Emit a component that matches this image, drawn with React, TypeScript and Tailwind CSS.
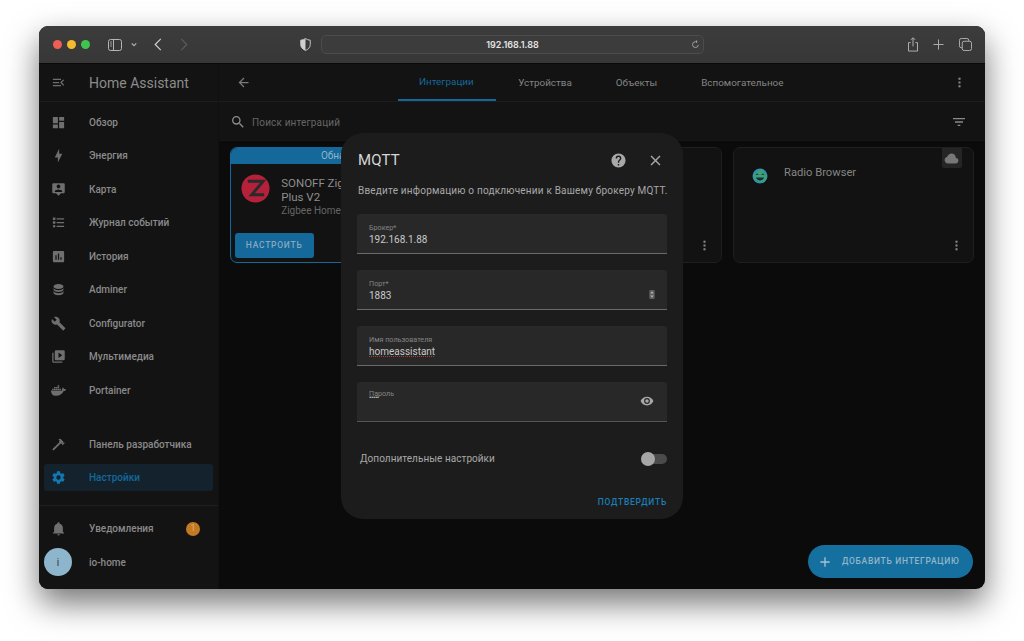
import React from 'react';
import { FaDocker } from 'react-icons/fa';

const mdi = {
  dashboard: 'M13,3V9H21V3M13,21H21V11H13M3,21H11V15H3M3,13H11V3H3V13Z',
  bolt: 'M11 15H6L13 1V9H18L11 23V15Z',
  map: 'M20 2H4C2.9 2 2 2.9 2 4V16C2 17.1 2.9 18 4 18H8L12 22L16 18H20C21.1 18 22 17.1 22 16V4C22 2.9 21.1 2 20 2M12 4C13.66 4 15 5.34 15 7S13.66 10 12 10 9 8.66 9 7 10.34 4 12 4M18 16H6V15C6 13 10 11.9 12 11.9S18 13 18 15V16Z',
  list: 'M3,4H7V8H3V4M3,10H7V14H3V10M5,20A2,2 0 0,0 7,18A2,2 0 0,0 5,16A2,2 0 0,0 3,18A2,2 0 0,0 5,20M9,5V7H21V5H9M9,19H21V17H9V19M9,13H21V11H9V13Z',
  chart: 'M19,3H5C3.9,3 3,3.9 3,5V19C3,20.1 3.9,21 5,21H19C20.1,21 21,20.1 21,19V5C21,3.9 20.1,3 19,3M9,17H7V10H9V17M13,17H11V7H13V17M17,17H15V13H17V17Z',
  database: 'M12,3C7.58,3 4,4.79 4,7C4,9.21 7.58,11 12,11C16.42,11 20,9.21 20,7C20,4.79 16.42,3 12,3M4,9V12C4,14.21 7.58,16 12,16C16.42,16 20,14.21 20,12V9C20,11.21 16.42,13 12,13C7.58,13 4,11.21 4,9M4,14V17C4,19.21 7.58,21 12,21C16.42,21 20,19.21 20,17V14C20,16.21 16.42,18 12,18C7.58,18 4,16.21 4,14Z',
  wrench: 'M22.7,19L13.6,9.9C14.5,7.6 14,4.9 12.1,3C10.1,1 7.1,0.6 4.7,1.7L9,6L6,9L1.6,4.7C0.4,7.1 0.9,10.1 2.9,12.1C4.8,14 7.5,14.5 9.8,13.6L18.9,22.7C19.3,23.1 19.9,23.1 20.3,22.7L22.6,20.4C23.1,20 23.1,19.3 22.7,19Z',
  media: 'M4,6H2V20A2,2 0 0,0 4,22H18V20H4V6M20,2H8A2,2 0 0,0 6,4V16A2,2 0 0,0 8,18H20A2,2 0 0,0 22,16V4A2,2 0 0,0 20,2M12,14.5V5.5L18,10L12,14.5Z',
  hammer: 'M2 19.63L13.43 8.2L12.72 7.5L14.14 6.07L12 3.89C13.2 2.7 15.09 2.7 16.27 3.89L19.87 7.5L18.45 8.91H21.29L22 9.62L18.45 13.21L17.74 12.5V9.62L16.27 11.04L15.56 10.33L4.13 21.76L2 19.63Z',
  cog: 'M12,15.5A3.5,3.5 0 0,1 8.5,12A3.5,3.5 0 0,1 12,8.5A3.5,3.5 0 0,1 15.5,12A3.5,3.5 0 0,1 12,15.5M19.43,12.97C19.47,12.65 19.5,12.33 19.5,12C19.5,11.67 19.47,11.34 19.43,11L21.54,9.37C21.73,9.22 21.78,8.95 21.66,8.73L19.66,5.27C19.54,5.05 19.27,4.96 19.05,5.05L16.56,6.05C16.04,5.66 15.5,5.32 14.87,5.07L14.5,2.42C14.46,2.18 14.25,2 14,2H10C9.75,2 9.54,2.18 9.5,2.42L9.13,5.07C8.5,5.32 7.96,5.66 7.44,6.05L4.95,5.05C4.73,4.96 4.46,5.05 4.34,5.27L2.34,8.73C2.21,8.95 2.27,9.22 2.46,9.37L4.57,11C4.53,11.34 4.5,11.67 4.5,12C4.5,12.33 4.53,12.65 4.57,12.97L2.46,14.63C2.27,14.78 2.21,15.05 2.34,15.27L4.34,18.73C4.46,18.95 4.73,19.03 4.95,18.95L7.44,17.94C7.96,18.34 8.5,18.68 9.13,18.93L9.5,21.58C9.54,21.82 9.75,22 10,22H14C14.25,22 14.46,21.82 14.5,21.58L14.87,18.93C15.5,18.67 16.04,18.34 16.56,17.94L19.05,18.95C19.27,19.03 19.54,18.95 19.66,18.73L21.66,15.27C21.78,15.05 21.73,14.78 21.54,14.63L19.43,12.97Z',
  bell: 'M21,19V20H3V19L5,17V11C5,7.9 7.03,5.17 10,4.29C10,4.19 10,4.1 10,4A2,2 0 0,1 12,2A2,2 0 0,1 14,4C14,4.1 14,4.19 14,4.29C16.97,5.17 19,7.9 19,11V17L21,19M14,21A2,2 0 0,1 12,23A2,2 0 0,1 10,21',
  menuOpen: 'M21,15.61L19.59,17L14.58,12L19.59,7L21,8.39L17.44,12L21,15.61M3,6H16V8H3V6M3,13V11H13V13H3M3,18V16H16V18H3Z',
  back: 'M20,11V13H8L13.5,18.5L12.08,19.92L4.16,12L12.08,4.08L13.5,5.5L8,11H20Z',
  dots: 'M12,16A2,2 0 0,1 14,18A2,2 0 0,1 12,20A2,2 0 0,1 10,18A2,2 0 0,1 12,16M12,10A2,2 0 0,1 14,12A2,2 0 0,1 12,14A2,2 0 0,1 10,12A2,2 0 0,1 12,10M12,4A2,2 0 0,1 14,6A2,2 0 0,1 12,8A2,2 0 0,1 10,6A2,2 0 0,1 12,4Z',
  search: 'M9.5,3A6.5,6.5 0 0,1 16,9.5C16,11.11 15.41,12.59 14.44,13.73L14.71,14H15.5L20.5,19L19,20.5L14,15.5V14.71L13.73,14.44C12.59,15.41 11.11,16 9.5,16A6.5,6.5 0 0,1 3,9.5A6.5,6.5 0 0,1 9.5,3M9.5,5C7,5 5,7 5,9.5C5,12 7,14 9.5,14C12,14 14,12 14,9.5C14,7 12,5 9.5,5Z',
  filter: 'M6,13H18V11H6M3,6V8H21V6M10,18H14V16H10V18Z',
  help: 'M15.07,11.25L14.17,12.17C13.45,12.89 13,13.5 13,15H11V14.5C11,13.39 11.45,12.39 12.17,11.67L13.41,10.41C13.78,10.05 14,9.55 14,9C14,7.89 13.1,7 12,7A2,2 0 0,0 10,9H8A4,4 0 0,1 12,5A4,4 0 0,1 16,9C16,9.88 15.64,10.67 15.07,11.25M13,19H11V17H13M12,2A10,10 0 0,0 2,12A10,10 0 0,0 12,22A10,10 0 0,0 22,12C22,6.47 17.5,2 12,2Z',
  close: 'M19,6.41L17.59,5L12,10.59L6.41,5L5,6.41L10.59,12L5,17.59L6.41,19L12,13.41L17.59,19L19,17.59L13.41,12L19,6.41Z',
  eye: 'M12,9A3,3 0 0,0 9,12A3,3 0 0,0 12,15A3,3 0 0,0 15,12A3,3 0 0,0 12,9M12,17A5,5 0 0,1 7,12A5,5 0 0,1 12,7A5,5 0 0,1 17,12A5,5 0 0,1 12,17M12,4.5C7,4.5 2.73,7.61 1,12C2.73,16.39 7,19.5 12,19.5C17,19.5 21.27,16.39 23,12C21.27,7.61 17,4.5 12,4.5Z',
  cloud: 'M6.5 20Q4.22 20 2.61 18.43 1 16.85 1 14.58 1 12.63 2.17 11.1 3.35 9.57 5.25 9.15 5.88 6.85 7.75 5.43 9.63 4 12 4 14.93 4 16.96 6.04 19 8.07 19 11 20.73 11.2 21.86 12.5 23 13.78 23 15.5 23 17.38 21.69 18.69 20.38 20 18.5 20Z',
  plus: 'M19,13H13V19H11V13H5V11H11V5H13V11H19V13Z',
};

const Icon = ({ d, className }: { d: string; className: string }) => (
  <svg viewBox="0 0 24 24" fill="currentColor" className={className}>
    <path d={d} />
  </svg>
);

const SideItem = ({ icon, label, docker, active, badge }: { icon?: string; label: string; docker?: boolean; active?: boolean; badge?: boolean }) => (
  <div className="h-[33.5px] px-[5px] flex items-center">
    <div className={`h-[27px] w-full rounded-[3px] flex items-center ${active ? 'bg-[#13222d]' : ''}`}>
      <div className="w-[45px] pl-[7px] shrink-0">
        {docker ? (
          <FaDocker className="w-[15px] h-[15px] text-[#6f6f6f]" />
        ) : (
          <Icon d={icon as string} className={`w-[15px] h-[15px] ${active ? 'text-[#1478b0]' : 'text-[#6f6f6f]'}`} />
        )}
      </div>
      <span className={`text-[10px] font-medium ${active ? 'text-[#14689a]' : 'text-[#8a8a8a]'}`}>{label}</span>
      {badge && (
        <span className="ml-auto mr-[13px] w-[14px] h-[14px] rounded-full bg-[#c17a22] text-[#e0b070] text-[9px] flex items-center justify-center">1</span>
      )}
    </div>
  </div>
);

const Field = ({ label, value, children }: { label: string; value?: React.ReactNode; children?: React.ReactNode }) => (
  <div className="h-[40px] bg-[#282828] rounded-t-[3px] border-b border-[#6a6a6a] pl-[12px] pr-[11px] flex items-start justify-between">
    <div className="pt-[10px]">
      <div className="text-[7.2px] leading-[8px] text-[#858585]">{label}</div>
      <div className="text-[10px] leading-[13px] text-[#c9c9c9] mt-[1px]">{value}</div>
    </div>
    {children}
  </div>
);

const App: React.FC = () => {
  return (
    <div className="w-[1024px] h-[641px] bg-white overflow-hidden pt-[26px] pl-[39px] font-['Roboto',sans-serif]">
      <div className="relative w-[946px] h-[563px] rounded-[9px] overflow-hidden shadow-[0_14px_32px_rgba(0,0,0,0.55)] bg-[#0b0b0b] flex flex-col">
        {/* Safari toolbar */}
        <div className="h-[38px] shrink-0 bg-gradient-to-b from-[#3c3c3c] to-[#373737] border-b border-[#0a0a0a] flex items-center text-[#b5b5b5]">
          <div className="flex gap-[5px] pl-[14px] w-[67px]">
            <span className="w-[9px] h-[9px] rounded-full bg-[#ed5f56]" />
            <span className="w-[9px] h-[9px] rounded-full bg-[#f4bb2e]" />
            <span className="w-[9px] h-[9px] rounded-full bg-[#3fc54d]" />
          </div>
          <svg viewBox="0 0 14 12" className="w-[14px] h-[12px] ml-[2px]" fill="none" stroke="currentColor" strokeWidth="1">
            <rect x="0.5" y="0.5" width="13" height="11" rx="2" />
            <path d="M5.5 0.5V11.5" />
            <path d="M2 3H4M2 5H4M2 7H4" strokeWidth="0.8" />
          </svg>
          <svg viewBox="0 0 8 6" className="w-[6px] h-[5px] ml-[9px]" fill="none" stroke="currentColor" strokeWidth="1.5">
            <path d="M1 1.5L4 4.5L7 1.5" />
          </svg>
          <svg viewBox="0 0 8 14" className="w-[8px] h-[13px] ml-[17px]" fill="none" stroke="#cfcfcf" strokeWidth="1.3">
            <path d="M7 1L1 7L7 13" />
          </svg>
          <svg viewBox="0 0 8 14" className="w-[8px] h-[13px] ml-[18px]" fill="none" stroke="#5c5c5c" strokeWidth="1.3">
            <path d="M1 1L7 7L1 13" />
          </svg>
          <svg viewBox="0 0 12 14" className="w-[11px] h-[13px] ml-[112px]">
            <path d="M6 0.5C4.5 1.6 2.8 2.2 0.8 2.3V7C0.8 10 3 12.3 6 13.5C9 12.3 11.2 10 11.2 7V2.3C9.2 2.2 7.5 1.6 6 0.5Z" fill="none" stroke="#cfcfcf" strokeWidth="1" />
            <path d="M6 0.5C4.5 1.6 2.8 2.2 0.8 2.3V7C0.8 10 3 12.3 6 13.5Z" fill="#cfcfcf" />
          </svg>
          <div className="ml-[10px] w-[383px] h-[19px] rounded-[5px] border border-[#4c4c4c] bg-[#3c3c3c] flex items-center relative">
            <span className="flex-1 text-center text-[9px] font-semibold text-[#e4e4e4] font-['Inter',sans-serif]">192.168.1.88</span>
            <svg viewBox="0 0 12 12" className="absolute right-[3px] w-[9px] h-[9px]" fill="none" stroke="#a8a8a8" strokeWidth="1.2">
              <path d="M9.8 6.5A3.9 3.9 0 1 1 6 2.2H8M6.6 0.6L8.3 2.2L6.6 3.8" />
            </svg>
          </div>
          <svg viewBox="0 0 12 16" className="w-[12px] h-[15px] ml-[203px]" fill="none" stroke="#b5b5b5" strokeWidth="1">
            <path d="M3.5 6H1.2V15H10.8V6H8.5M6 10V1M3.8 3L6 0.8L8.2 3" />
          </svg>
          <svg viewBox="0 0 12 12" className="w-[11px] h-[11px] ml-[14px]" fill="none" stroke="#b5b5b5" strokeWidth="1">
            <path d="M6 0.5V11.5M0.5 6H11.5" />
          </svg>
          <svg viewBox="0 0 14 14" className="w-[13px] h-[13px] ml-[15px]" fill="none" stroke="#b5b5b5" strokeWidth="1">
            <rect x="3.5" y="3.5" width="10" height="10" rx="2" />
            <path d="M3.5 10.5H2.5A2 2 0 0 1 0.5 8.5V2.5A2 2 0 0 1 2.5 0.5H8.5A2 2 0 0 1 10.5 2.5V3.5" />
          </svg>
        </div>

        <div className="flex-1 flex min-h-0">
          {/* Sidebar */}
          <aside className="w-[180px] shrink-0 bg-[#131313] border-r border-[#101010] flex flex-col">
            <div className="h-[38px] border-b border-[#1d1d1d] flex items-center pl-[12px] shrink-0">
              <Icon d={mdi.menuOpen} className="w-[15px] h-[15px] text-[#6f6f6f]" />
              <span className="ml-[23px] text-[14px] leading-[20px] pt-[1px] text-[#8c8c8c]">Home Assistant</span>
            </div>
            <div className="pt-[3.5px]">
              <SideItem icon={mdi.dashboard} label="Обзор" />
              <SideItem icon={mdi.bolt} label="Энергия" />
              <SideItem icon={mdi.map} label="Карта" />
              <SideItem icon={mdi.list} label="Журнал событий" />
              <SideItem icon={mdi.chart} label="История" />
              <SideItem icon={mdi.database} label="Adminer" />
              <SideItem icon={mdi.wrench} label="Configurator" />
              <SideItem icon={mdi.media} label="Мультимедиа" />
              <SideItem docker label="Portainer" />
            </div>
            <div className="mt-[20.5px] border-b border-[#1f1f1f] pb-[10px]">
              <SideItem icon={mdi.hammer} label="Панель разработчика" />
              <SideItem icon={mdi.cog} label="Настройки" active />
            </div>
            <div className="pt-[6.5px]">
              <SideItem icon={mdi.bell} label="Уведомления" badge />
              <div className="h-[33.5px] flex items-center pl-[5px]">
                <span className="w-[28px] h-[28px] rounded-full bg-[#8db5cc] text-[#2f3d46] text-[10px] flex items-center justify-center">i</span>
                <span className="ml-[17px] text-[10px] font-medium text-[#8a8a8a]">io-home</span>
              </div>
            </div>
          </aside>

          {/* Main */}
          <main className="flex-1 flex flex-col min-w-0 relative">
            <div className="h-[38px] shrink-0 bg-[#131313] border-b border-[#1d1d1d] flex items-center">
              <div className="flex-1 pl-[17px]">
                <Icon d={mdi.back} className="w-[15px] h-[15px] text-[#7a7a7a]" />
              </div>
              <div className="flex h-full text-[9.9px] text-[#858585]">
                <div className="pl-[21.5px] pr-[22.5px] pt-[1px] flex items-center text-[#14689a] border-b-2 border-[#14689a]">Интеграции</div>
                <div className="px-[22px] pt-[1px] flex items-center">Устройства</div>
                <div className="px-[22px] pt-[1px] flex items-center">Объекты</div>
                <div className="px-[22px] pt-[1px] flex items-center">Вспомогательное</div>
              </div>
              <div className="flex-1 flex justify-end pr-[18px]">
                <Icon d={mdi.dots} className="w-[15px] h-[15px] text-[#7a7a7a]" />
              </div>
            </div>
            <div className="h-[39px] shrink-0 bg-[#131313] border-b border-[#161616] flex items-center pt-[2px] pl-[11px] pr-[18px]">
              <Icon d={mdi.search} className="w-[16px] h-[16px] text-[#8a8a8a]" />
              <span className="ml-[6px] text-[10px] tracking-[0.15px] text-[#666666]">Поиск интеграций</span>
              <Icon d={mdi.filter} className="w-[16px] h-[16px] text-[#8a8a8a] ml-auto" />
            </div>

            <div className="grid grid-cols-3 gap-[11px] pl-[10.7px] pr-[11.3px] pt-[6px]">
              <div className="relative h-[116px] rounded-[7px] border border-[#14689a] bg-[#121212] overflow-hidden">
                <div className="h-[16px] bg-[#14689a] text-center text-[10px] leading-[16px] text-[#8fb2c8]">Обнаружено</div>
                <div className="flex pl-[10.5px] pt-[10px]">
                  <svg viewBox="0 0 30 30" className="w-[29px] h-[29px] shrink-0">
                    <circle cx="15" cy="15" r="14.5" fill="#b5213a" />
                    <path d="M7 7.5H23L11 21.5H24" fill="none" stroke="#2a2a2a" strokeWidth="3" />
                  </svg>
                  <div className="ml-[11px] mt-[2px] text-[11.5px] leading-[14px] text-[#8e8e8e] whitespace-nowrap">
                    <div>SONOFF Zigbee 3.0 USB</div>
                    <div>Plus V2</div>
                    <div className="text-[10px] leading-[14px] text-[#666666]">Zigbee Home Automation</div>
                  </div>
                </div>
                <div className="absolute left-[4px] bottom-[4px] w-[79px] h-[25px] rounded-[3px] bg-[#14689a] flex items-center justify-center text-[8.5px] font-medium tracking-[0.75px] text-[#86a9bf]">
                  НАСТРОИТЬ
                </div>
              </div>
              <div className="relative h-[116px] rounded-[7px] border border-[#1f1f1f] bg-[#121212]">
                <Icon d={mdi.dots} className="absolute right-[9px] bottom-[9px] w-[15px] h-[15px] text-[#7a7a7a]" />
              </div>
              <div className="relative h-[116px] rounded-[7px] border border-[#1f1f1f] bg-[#121212]">
                <div className="flex pl-[18px] pt-[17px]">
                  <svg viewBox="0 0 16 16" className="w-[16px] h-[16px] mt-[3px] shrink-0">
                    <circle cx="8" cy="8" r="7.5" fill="#2e8fb8" />
                    <path d="M1 7C3 5 5 5 6 3C7 1 10 1 12 2C10 4 13 5 15 7C15 11 13 14 10 15C11 13 4 14 2 11Z" fill="#3f9e78" />
                    <path d="M4 9.5C5 13.5 11 13.5 12 9.5Z" fill="#10303a" />
                    <path d="M3.8 7C4.4 5.8 5.8 5.8 6.4 7M9.6 7C10.2 5.8 11.6 5.8 12.2 7" fill="none" stroke="#10303a" strokeWidth="1" />
                  </svg>
                  <span className="ml-[16px] text-[11.2px] leading-[16px] text-[#858585]">Radio Browser</span>
                </div>
                <div className="absolute right-[11px] top-0 w-[20px] h-[20px] bg-[#252525] rounded-b-[2px] flex items-center justify-center">
                  <Icon d={mdi.cloud} className="w-[15px] h-[15px] text-[#777777]" />
                </div>
                <Icon d={mdi.dots} className="absolute right-[9px] bottom-[9px] w-[15px] h-[15px] text-[#7a7a7a]" />
              </div>
            </div>

            {/* FAB */}
            <div className="absolute right-[12px] bottom-[11px] h-[33px] w-[165px] rounded-full bg-[#16709f] flex items-center pl-[9px]">
              <Icon d={mdi.plus} className="w-[16px] h-[16px] text-[#a3c3d6]" />
              <span className="ml-[9px] text-[8.5px] font-medium tracking-[0.7px] text-[#92b5ca] whitespace-nowrap">ДОБАВИТЬ ИНТЕГРАЦИЮ</span>
            </div>
          </main>
        </div>

        {/* MQTT dialog */}
        <div className="absolute left-[302px] top-[107px] w-[342px] h-[386px] rounded-[22px] bg-[#1c1c1c] px-[16px] flex flex-col">
          <div className="h-[51px] flex items-center shrink-0 pt-[3px]">
            <span className="ml-[1px] text-[15px] tracking-[0.2px] text-[#d6d6d6]">MQTT</span>
            <Icon d={mdi.help} className="ml-auto w-[17px] h-[17px] text-[#a8a8a8]" />
            <Icon d={mdi.close} className="ml-[20px] mr-[3px] w-[17px] h-[17px] text-[#a8a8a8]" />
          </div>
          <p className="ml-[1px] text-[10px] leading-[13px] tracking-[0.2px] text-[#a8a8a8] whitespace-nowrap mb-[17px]">
            Введите информацию о подключении к Вашему брокеру MQTT.
          </p>
          <div className="flex flex-col gap-[16px]">
            <Field label="Брокер*" value="192.168.1.88" />
            <Field label="Порт*" value="1883">
              <svg viewBox="0 0 6 10" className="w-[6px] h-[9px] mt-[20px] mr-[1px]">
                <rect width="6" height="10" rx="1" fill="#5e5e5e" />
                <path d="M3 1.5L5 4H1ZM3 8.5L1 6H5Z" fill="#b0b0b0" />
              </svg>
            </Field>
            <Field label="Имя пользователя" value={<span className="underline decoration-dotted decoration-[#b03c3c] underline-offset-1">homeassistant</span>} />
            <div className="h-[40px] bg-[#282828] rounded-t-[3px] border-b border-[#555555] pl-[12px] pr-[13px] flex items-center justify-between">
              <div className="self-start pt-[8px] relative">
                <div className="text-[7.2px] leading-[8px] text-[#858585]">Пароль</div>
                <div className="absolute left-0 top-[13px] text-[7px] leading-[7px] tracking-[-0.4px] text-[#c9c9c9]">•••••</div>
              </div>
              <Icon d={mdi.eye} className="w-[14px] h-[14px] text-[#a8a8a8] mt-[-1px]" />
            </div>
          </div>
          <div className="flex items-center mt-[29px] pl-[3px]">
            <span className="text-[10px] tracking-[0.05px] text-[#a8a8a8]">Дополнительные настройки</span>
            <div className="ml-auto relative w-[26px] h-[10px] rounded-full bg-[#4b4b4b]">
              <span className="absolute left-0 top-[-2px] w-[14px] h-[14px] rounded-full bg-[#a6a6a6]" />
            </div>
          </div>
          <div className="mt-[30px] text-right text-[8.5px] font-medium tracking-[0.75px] text-[#1a7fb8]">ПОДТВЕРДИТЬ</div>
        </div>
      </div>
    </div>
  );
};

export default App;
